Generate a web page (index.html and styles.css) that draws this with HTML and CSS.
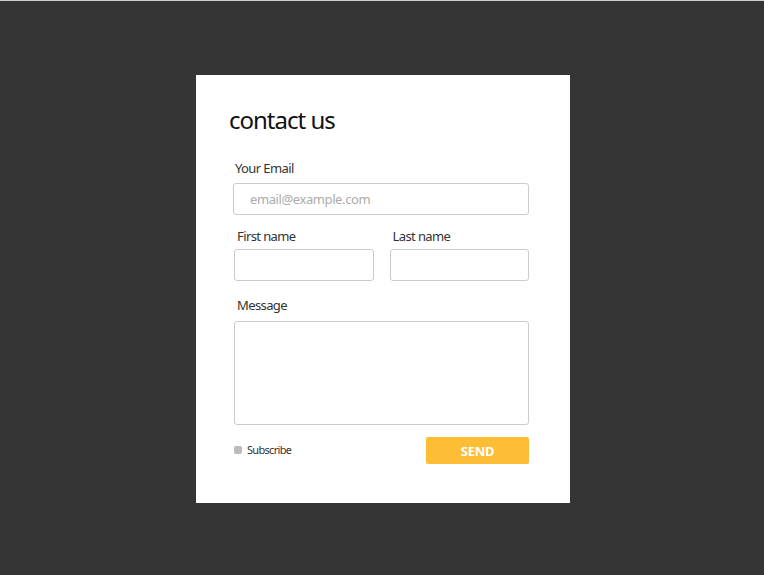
FILE: index.html
```html
<!DOCTYPE html>
<html lang="en">
<head>
<meta charset="utf-8">
<title>contact us</title>
<link rel="stylesheet" href="styles.css">
</head>
<body>
<main class="card">
  <h1 class="title">contact us</h1>
  <form class="form">
    <label class="label label-email" for="email">Your Email</label>
    <input class="field field-email" id="email" type="email" placeholder="email@example.com">
    <div class="name-row">
      <div class="name-col">
        <label class="label" for="first">First name</label>
        <input class="field" id="first" type="text">
      </div>
      <div class="name-col">
        <label class="label" for="last">Last name</label>
        <input class="field" id="last" type="text">
      </div>
    </div>
    <label class="label label-msg" for="msg">Message</label>
    <textarea class="field area" id="msg"></textarea>
    <div class="bottom-row">
      <label class="sub"><span class="check"></span>Subscribe</label>
      <button class="send" type="button">SEND</button>
    </div>
  </form>
</main>
</body>
</html>
```
FILE: styles.css
```css
html, body {
  margin: 0;
  padding: 0;
}
body {
  background: #353535;
  border-top: 1px solid #cfcfcf;
  min-height: 574px;
  font-family: "Noto Sans", "Open Sans", sans-serif;
}
.card {
  box-sizing: border-box;
  width: 374px;
  height: 428px;
  margin: 74px 0 0 196px;
  background: #fff;
  padding: 30px 0 0 37px;
}
.title {
  margin: 0 0 0 -4px;
  font-size: 24px;
  line-height: 30px;
  font-weight: 400;
  letter-spacing: -1px;
  color: #111;
}
.form {
  width: 296px;
  display: flex;
  flex-direction: column;
  margin-top: 25px;
}
.label {
  display: block;
  font-size: 13px;
  line-height: 16px;
  color: #333;
  letter-spacing: -0.6px;
  padding-left: 3px;
}
.label-email { padding-left: 2px; margin-bottom: 7px; }
.field {
  box-sizing: border-box;
  display: block;
  width: 100%;
  height: 32px;
  border: 1px solid #cbcbcb;
  border-radius: 3px;
  background: #fff;
  margin: 0;
  padding: 0 16px;
  font-family: inherit;
  font-size: 13px;
  color: #333;
  outline: none;
}
.field::placeholder {
  color: #ababab;
  letter-spacing: -0.4px;
}
.name-row {
  display: flex;
  gap: 16px;
  margin-top: 13px;
  padding-left: 1px;
}
.name-col {
  flex: 1;
  display: flex;
  flex-direction: column;
  gap: 5px;
}
.label-msg {
  margin-top: 16px;
  margin-bottom: 8px;
  margin-left: 1px;
}
.area {
  height: 104px;
  width: 295px;
  margin-left: 1px;
  resize: none;
}
.bottom-row {
  display: flex;
  justify-content: space-between;
  align-items: center;
  margin-top: 12px;
  padding-left: 1px;
}
.sub {
  display: flex;
  align-items: center;
  gap: 5px;
  font-size: 11px;
  line-height: 14px;
  letter-spacing: -0.7px;
  color: #333;
  margin-top: -1px;
}
.check {
  width: 8px;
  height: 8px;
  background: #bcbcbc;
  border-radius: 2px;
}
.send {
  width: 103px;
  height: 27px;
  border: none;
  border-radius: 2px;
  background: #fdbd34;
  color: #fff;
  font-family: inherit;
  font-size: 13px;
  font-weight: 700;
  letter-spacing: -0.3px;
  padding: 0;
  cursor: pointer;
}
```
